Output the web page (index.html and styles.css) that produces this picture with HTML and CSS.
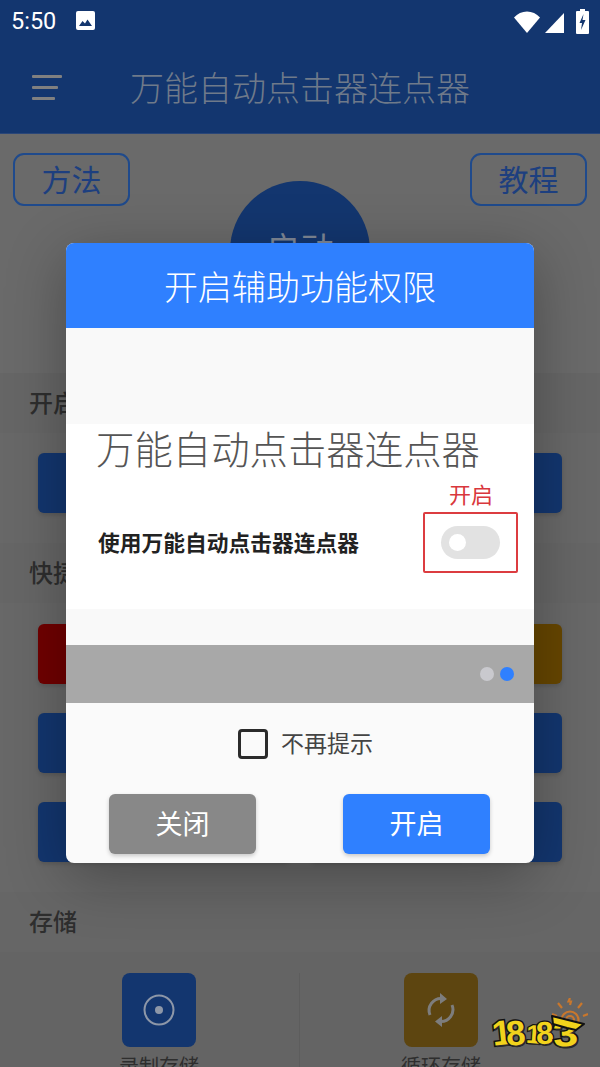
FILE: index.html
```html
<!DOCTYPE html>
<html lang="zh">
<head>
<meta charset="utf-8">
<title>万能自动点击器连点器</title>
<link rel="stylesheet" href="styles.css">
</head>
<body>
<div class="page">
  <header class="header">
    <div class="status">
      <span class="time">5:50</span>
      <svg class="pic" viewBox="0 0 19 19"><rect width="19" height="19" rx="2" fill="#fff"/><path d="M3 15l3.500-5 2.500 2.500 2.500-4 4.500 6.500z" fill="#13366f"/></svg>
      <span class="grow"></span>
      <svg class="wifi" viewBox="0 0 26 22"><path d="M0 6.500C3.500 2.500 8 .5 13 .5s9.500 2 13 6L13 22z" fill="#fff"/></svg>
      <svg class="signal" viewBox="0 0 19 20"><path d="M19 0v20H0z" fill="#fff"/></svg>
      <svg class="battery" viewBox="0 0 13 25"><path d="M4 0h5v2h3a1 1 0 0 1 1 1v21a1 1 0 0 1-1 1H1a1 1 0 0 1-1-1V3a1 1 0 0 1 1-1h3z" fill="#fff"/><path d="M7.500 5L3.500 14h2.500l-1 7 4.500-10H6.500z" fill="#13366f"/></svg>
    </div>
    <div class="appbar">
      <div class="menu"><i class="l1"></i><i class="l2"></i><i class="l3"></i></div>
      <div class="apptitle">万能自动点击器连点器</div>
    </div>
  </header>

  <section class="top">
    <div class="outline">方法</div>
    <div class="start">启动</div>
    <div class="outline">教程</div>
  </section>

  <div class="head">开启权限</div>
  <div class="body"><div class="btn blue"></div></div>

  <div class="head">快捷操作</div>
  <div class="body grid">
    <div class="btn red"></div><div class="btn amber"></div>
    <div class="btn blue"></div><div class="btn blue"></div>
    <div class="btn blue"></div><div class="btn blue"></div>
  </div>

  <div class="head store">存储</div>
  <div class="storage">
    <div class="col">
      <div class="tile blue">
        <svg viewBox="0 0 32 32"><circle cx="16" cy="16" r="14.500" fill="none" stroke="#8d97a8" stroke-width="2"/><circle cx="16" cy="16" r="4" fill="#8d97a8"/></svg>
      </div>
      <div class="cap">录制存储</div>
    </div>
    <div class="col divided">
      <div class="tile brown">
        <svg viewBox="0 0 32 32"><g fill="none" stroke="#7d7d7d" stroke-width="3"><path d="M5 21A12 12 0 0 1 17 4.500"/><path d="M27 11A12 12 0 0 1 15 27.500"/></g><path d="M15 -1l7 6-7 5zM17 22l-7 5.500 7 5.500z" fill="#7d7d7d"/></svg>
      </div>
      <div class="cap">循环存储</div>
    </div>
  </div>

  <div class="logo">
    <svg class="sun" viewBox="0 0 36 26"><g fill="none" stroke="#c9772c" stroke-width="2.200"><circle cx="18" cy="22" r="8.500"/><circle cx="18" cy="22" r="4"/><path d="M18 0l-1.500 3.500 2.500 0-1 3.500M6 5l4 5M30 5l-4 5M0 16l5 2M36 16l-5 2"/></g></svg>
    <span class="g g1">1</span><span class="g g2">8</span><span class="g g3">1</span><span class="g g4">8</span><span class="g g5">3</span>
    <svg class="ztop" viewBox="0 0 34 16"><path d="M1 1l32 8-8 6-9-2-14-4z" fill="#f2d31c" stroke="#111" stroke-width="2" stroke-linejoin="round"/></svg>
  </div>

  <div class="overlay">
    <div class="dialog">
      <div class="dtitle">开启辅助功能权限</div>
      <div class="band b1"></div>
      <div class="shot">
        <div class="shot-title">万能自动点击器连点器</div>
        <div class="shot-hint">开启</div>
        <div class="shot-row">
          <span class="shot-label">使用万能自动点击器连点器</span>
          <span class="redbox"><span class="switch"><span class="knob"></span></span></span>
        </div>
      </div>
      <div class="band b2"></div>
      <div class="pager"><span class="dot"></span><span class="dot on"></span></div>
      <div class="foot">
        <label class="check"><span class="box"></span><span class="check-text">不再提示</span></label>
        <div class="actions">
          <div class="action grey">关闭</div>
          <div class="action primary">开启</div>
        </div>
      </div>
    </div>
  </div>
</div>
</body>
</html>
```

FILE: styles.css
```css
* { box-sizing: border-box; }
html, body { margin: 0; height: 100%; overflow: hidden; }
body { font-family: "Noto Sans CJK SC", "Noto Sans", sans-serif; background: #686868; }
.page { position: relative; width: 600px; height: 1067px; overflow: hidden; background: #686868; }

.header { height: 134px; background: #13366f; border-bottom: 1px solid #2a4678; }
.status { height: 44px; display: flex; align-items: flex-start; padding: 0 11px; }
.time { font: 400 23.500px/42px Roboto, sans-serif; color: #fff; width: 65px; }
.pic { width: 19px; height: 19px; margin-top: 11px; }
.grow { flex: 1; }
.wifi { width: 26px; height: 22px; margin-top: 11px; }
.signal { width: 19px; height: 20px; margin: 13px 0 0 5px; }
.battery { width: 13px; height: 25px; margin: 9px 0 0 12px; }
.appbar { height: 89px; display: flex; align-items: flex-start; padding-left: 32px; }
.menu { width: 30px; padding-top: 31px; }
.menu i { display: block; height: 3px; margin-bottom: 8px; background: #808080; border-radius: 1px; }
.menu .l1 { width: 30px; }
.menu .l2 { width: 26px; }
.menu .l3 { width: 23px; }
.apptitle { margin-left: 68px; font-size: 34px; line-height: 85px; color: #6f7a8a; white-space: nowrap; font-weight: 300; }

.top { height: 239px; display: grid; grid-template-columns: 117px 1fr 117px; align-items: start; padding: 19px 13px 0; background: #6a6a6a; }
.outline { height: 53px; border: 2px solid #1f4a8c; border-radius: 11px; color: #1d3f7f; font-size: 30px; line-height: 47px; text-align: center; }
.start { justify-self: center; width: 140px; height: 140px; margin-top: 28px; border-radius: 50%; background: #13366f; color: #7f8896; font-size: 34px; line-height: 134px; text-align: center; }

.head { height: 60px; padding-left: 29px; background: #666; color: #2e2e2e; font-size: 24px; line-height: 57px; font-weight: 500; }
.body { height: 110px; padding: 20px 38px; background: #686868; }
.grid { height: 289px; display: grid; grid-template-columns: 1fr 1fr; grid-auto-rows: 60px; gap: 29px 20px; padding-top: 21px; }
.btn { height: 60px; border-radius: 6px; box-shadow: 0 2px 4px rgba(0,0,0,.15); }
.blue { background: #13366f; }
.red { background: #700000; }
.amber { background: #664600; }
.brown { background: #5d4510; }

.storage { display: grid; grid-template-columns: 1fr 1fr; padding: 21px 18px 0; height: 115px; background: #646464; }
.col { display: flex; flex-direction: column; align-items: center; gap: 4px; }
.divided { box-shadow: -1px 0 0 #5d5d5d; }
.tile { width: 74px; height: 74px; border-radius: 8px; display: flex; align-items: center; justify-content: center; flex: none; }
.tile svg { width: 32px; height: 32px; overflow: visible; }
.cap { font-size: 20px; line-height: 30px; color: #2e2e2e; white-space: nowrap; }

.logo { position: absolute; left: 493px; top: 998px; width: 96px; height: 54px; display: flex; align-items: flex-end; }
.sun { position: absolute; left: 59px; top: 0; width: 36px; height: 26px; }
.ztop { position: absolute; left: 58px; top: 17px; width: 34px; height: 16px; }
.g { position: relative; font: 700 35px/38px "Liberation Sans", sans-serif; color: #f2d31c; -webkit-text-stroke: 3px #111; paint-order: stroke fill; text-shadow: 1px 2px 0 #2a2a2a; }
.g1 { transform: rotate(-6deg); width: 15px; left: -1px; }
.g2 { transform: rotate(-4deg); width: 20px; left: -2px; }
.g3 { transform: rotate(4deg) scale(.75); width: 9px; left: -3px; top: 1px; }
.g4 { transform: rotate(-3deg) scale(.9); width: 18px; left: -2px; }
.g5 { transform: rotate(-4deg) scaleX(1.250); font-size: 36px; width: 26px; left: 1px; top: 1px; }

.overlay { position: absolute; inset: 0; display: flex; justify-content: center; align-items: flex-start; padding-top: 243px; }
.dialog { width: 468px; height: 620px; border-radius: 8px; overflow: hidden; background: #fafafa; box-shadow: 0 14px 60px rgba(0,0,0,.3); }
.dtitle { height: 85px; background: #2f80ff; color: #fff; font-size: 34px; line-height: 85px; text-align: center; font-weight: 300; }
.band { background: #f9f9f9; }
.b1 { height: 96px; }
.b2 { height: 36px; }
.shot { height: 185px; background: #fff; padding: 0 16px 0 30px; }
.shot-title { font-size: 38.400px; line-height: 46px; height: 52px; color: #555; font-weight: 300; white-space: nowrap; }
.shot-hint { height: 35px; margin-top: 1px; padding-left: 353px; font-size: 22px; line-height: 32px; color: #d9373c; }
.shot-row { display: flex; align-items: center; justify-content: space-between; }
.shot-label { padding: 0 0 3px 2px; font-size: 21.750px; font-weight: 700; color: #222; white-space: nowrap; }
.redbox { width: 95px; height: 61px; border: 2px solid #dc3c40; border-radius: 2px; display: flex; align-items: center; justify-content: center; }
.switch { display: flex; align-items: center; width: 59px; height: 33px; border-radius: 17px; background: #e2e2e2; padding-left: 8px; }
.knob { width: 17px; height: 17px; border-radius: 50%; background: #fff; }
.pager { height: 58px; background: #a8a8a8; display: flex; justify-content: flex-end; align-items: center; gap: 6px; padding-right: 20px; }
.dot { width: 14px; height: 14px; border-radius: 50%; background: #c9c9ce; }
.dot.on { background: #2f80ff; }
.foot { height: 160px; padding-top: 26px; }
.check { display: flex; align-items: center; justify-content: center; gap: 13px; height: 30px; padding-left: 11px; font-size: 23px; line-height: 27px; color: #444; }
.check-text { padding-bottom: 3px; }
.box { width: 30px; height: 30px; border: 3px solid #2b2b2b; border-radius: 4px; }
.actions { display: flex; justify-content: space-between; padding: 35px 44px 0 43px; }
.action { width: 147px; height: 60px; border-radius: 6px; color: #fff; font-size: 27px; line-height: 58px; text-align: center; box-shadow: 0 2px 4px rgba(0,0,0,.2); }
.grey { background: #888; }
.primary { background: #2f80ff; }
```
